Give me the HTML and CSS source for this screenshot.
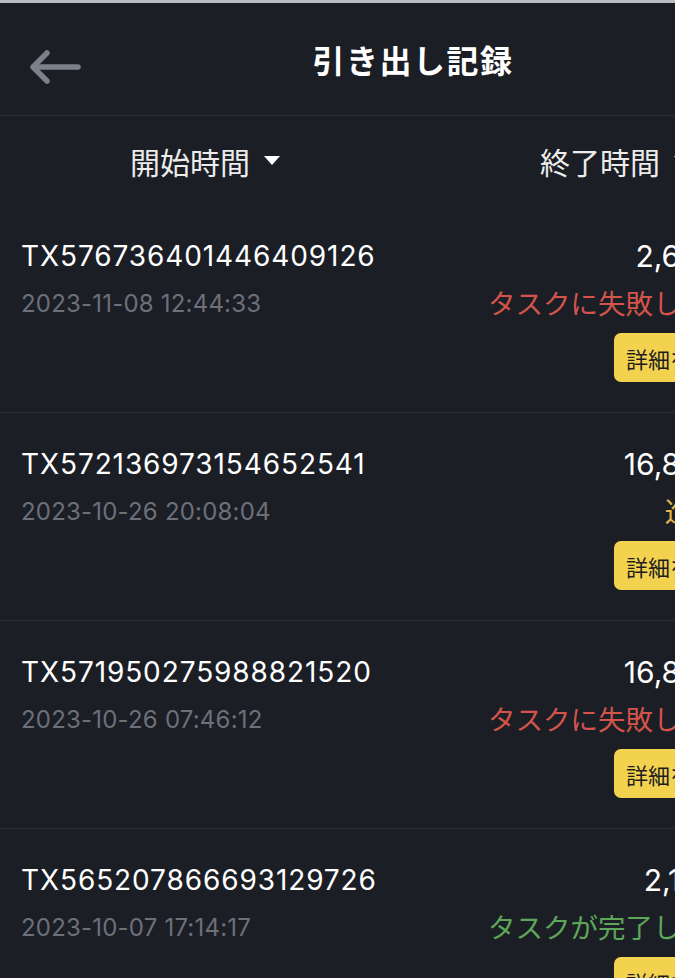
FILE: index.html
```html
<!DOCTYPE html>
<html lang="ja">
<head>
    <meta charset="UTF-8">
    <meta name="viewport" content="width=device-width, initial-scale=1.0">
    <title>引き出し記録</title>
    <link rel="stylesheet" href="styles.css">
</head>
<body>
    <div class="page">
        <header class="header">
            <a class="back" href="#">
                <svg width="54" height="36" viewBox="0 0 54 36" fill="none" stroke="#7c8088" stroke-width="5.5" stroke-linecap="round" stroke-linejoin="round">
                    <path d="M50 18H6"/>
                    <path d="M19 4L5 18L19 32"/>
                </svg>
            </a>
            <h1>引き出し記録</h1>
        </header>

        <div class="tabs">
            <div class="tab">開始時間 <span class="caret"></span></div>
            <div class="tab">終了時間 <span class="caret"></span></div>
        </div>

        <div class="list">
            <div class="row">
                <div class="left">
                    <div class="tx">TX576736401446409126</div>
                    <div class="date">2023-11-08 12:44:33</div>
                </div>
                <div class="right">
                    <div class="amount">2,600.00</div>
                    <div class="status failed">タスクに失敗しました</div>
                    <button class="detail">詳細を見る</button>
                </div>
            </div>
            <div class="row">
                <div class="left">
                    <div class="tx">TX572136973154652541</div>
                    <div class="date">2023-10-26 20:08:04</div>
                </div>
                <div class="right">
                    <div class="amount">16,800.00</div>
                    <div class="status pending">進行中..</div>
                    <button class="detail">詳細を見る</button>
                </div>
            </div>
            <div class="row">
                <div class="left">
                    <div class="tx">TX571950275988821520</div>
                    <div class="date">2023-10-26 07:46:12</div>
                </div>
                <div class="right">
                    <div class="amount">16,800.00</div>
                    <div class="status failed">タスクに失敗しました</div>
                    <button class="detail">詳細を見る</button>
                </div>
            </div>
            <div class="row">
                <div class="left">
                    <div class="tx">TX565207866693129726</div>
                    <div class="date">2023-10-07 17:14:17</div>
                </div>
                <div class="right">
                    <div class="amount">2,100.00</div>
                    <div class="status done">タスクが完了しました</div>
                    <button class="detail">詳細を見る</button>
                </div>
            </div>
        </div>
    </div>
</body>
</html>
```

FILE: styles.css
```css
html, body {
    overflow: hidden;
}
body {
    margin: 0;
    background-color: #1b1e25;
    font-family: Inter, "Noto Sans CJK JP", sans-serif;
    color: #ffffff;
}
.page {
    width: 820px;
    border-top: 3px solid #babcbf;
}
.header {
    height: 112px;
    display: flex;
    align-items: center;
    justify-content: center;
    position: relative;
    border-bottom: 1px solid #2c3038;
}
.back {
    position: absolute;
    left: 28px;
    top: 46px;
    display: flex;
}
.header h1 {
    margin: 0 0 0 6px;
    font-size: 32px;
    font-weight: 600;
    letter-spacing: 1.5px;
    color: #ffffff;
}
.tabs {
    height: 89px;
    display: flex;
}
.tab {
    flex: 1;
    display: flex;
    align-items: center;
    justify-content: center;
    gap: 14px;
    font-size: 30px;
    color: #ececec;
}
.caret {
    width: 0;
    height: 0;
    border-left: 8px solid transparent;
    border-right: 8px solid transparent;
    border-top: 9px solid #ffffff;
}
.row {
    display: flex;
    justify-content: space-between;
    padding: 33px 57px 30px 21px;
    border-bottom: 1px solid #2c3038;
}
.tx {
    font-size: 28px;
    letter-spacing: 0.9px;
    line-height: 36px;
    color: #ffffff;
}
.amount {
    font-size: 30px;
    line-height: 36px;
    color: #ffffff;
}
.date {
    margin-top: 15px;
    font-size: 24px;
    letter-spacing: 0.2px;
    line-height: 30px;
    color: #6c7079;
}
.right {
    display: flex;
    flex-direction: column;
    align-items: flex-end;
}
.status {
    margin-top: 15px;
    font-size: 27.5px;
    line-height: 30px;
}
.status.failed {
    color: #d2544b;
}
.status.pending {
    color: #e2b846;
}
.status.done {
    color: #5ea659;
}
.detail {
    margin-top: 14px;
    width: 149px;
    height: 49px;
    padding: 0 12px;
    border: none;
    border-radius: 7px;
    background-color: #f3d250;
    color: #1e1e1e;
    font-family: inherit;
    font-size: 22px;
    text-align: left;
}
```
